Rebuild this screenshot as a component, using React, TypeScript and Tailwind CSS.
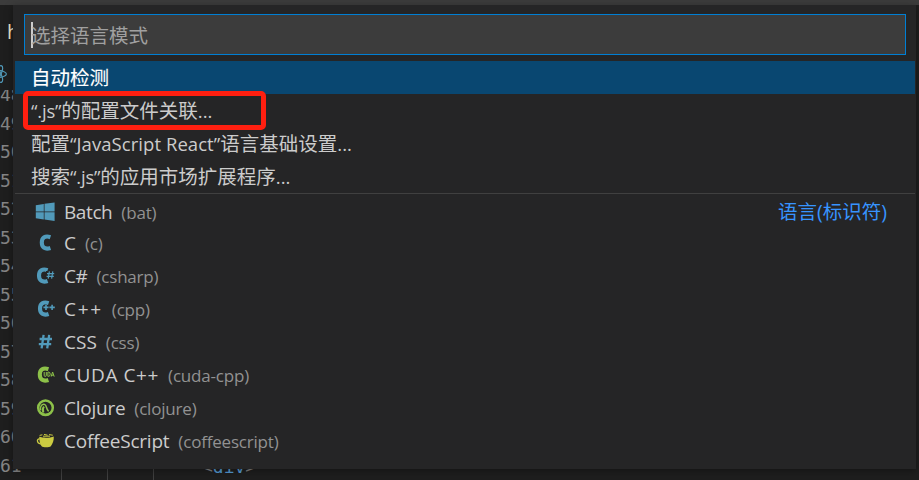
import React from "react";
import clsx from "clsx";

interface Language {
  name: string;
  id: string;
  icon: React.ReactNode;
  nameClass?: string;
}

const BLUE = "#519aba";
const GREEN = "#8dc149";
const YELLOW = "#cbcb41";

// Thick "C" shared by the C family of file icons
const CMark: React.FC<{ color: string; children?: React.ReactNode; x?: number }> = ({ color, children, x = 0 }) => (
  <svg width="20" height="20" viewBox="0 0 20 20">
    <path
      d="M12.8 4.6 C7.6 2.8 4.2 5 4.2 10 C4.2 15 7.6 17.2 12.8 15.4"
      transform={`translate(${x} -0.4)`}
      fill="none"
      stroke={color}
      strokeWidth="4.1"
    />
    {children}
  </svg>
);

const languages: Language[] = [
  {
    name: "Batch",
    id: "bat",
    nameClass: "tracking-[-0.4px]",
    icon: (
      <svg width="20" height="20" viewBox="0 0 20 20">
        <path fill={BLUE} d="M0.8 3.2 8.8 1.9V9.4H0.8zM9.5 1.8 19.6 0.4V9.4H9.5zM0.8 10.2H8.8V17.4L0.8 16.2zM9.5 10.2H19.6V19L9.5 17.5z" />
      </svg>
    ),
  },
  { name: "C", id: "c", icon: <CMark color={BLUE} x={2.6} /> },
  {
    name: "C#",
    id: "csharp",
    nameClass: "tracking-[-0.4px]",
    icon: (
      <CMark color={BLUE} x={-0.2}>
        <path d="M11 5H20V13H11z" fill="#252526" />
        <path d="M14.4 5.4 13.2 12.6M17.8 5.4 16.6 12.6M12 7.7H19.2M11.6 10.4H18.8" stroke={BLUE} strokeWidth="1.2" />
      </CMark>
    ),
  },
  {
    name: "C++",
    id: "cpp",
    nameClass: "tracking-[1.7px]",
    icon: (
      <CMark color={BLUE} x={0.8}>
        <path d="M8 8.4H13.5M10.8 5.8V11.2M14.2 8.4H19.6M16.9 5.8V11.2" stroke="#252526" strokeWidth="3.2" />
        <path d="M8.4 8.4H13.6M11 5.8V11M14.4 8.4H19.8M17.1 5.8V11" stroke={BLUE} strokeWidth="1.6" />
      </CMark>
    ),
  },
  {
    name: "CSS",
    id: "css",
    icon: (
      <svg width="20" height="20" viewBox="0 0 20 20">
        <path d="M8.6 2.8 6.6 16.4M14.2 2.8 12.2 16.4M4.6 7H17M3.8 12.2H16.2" stroke={BLUE} strokeWidth="2.3" />
      </svg>
    ),
  },
  {
    name: "CUDA C++",
    id: "cuda-cpp",
    nameClass: "tracking-[0.6px]",
    icon: (
      <CMark color={GREEN} x={0.6}>
        <path d="M8 6.2H20V12.4H8z" fill="#252526" />
        <path d="M9.2 7V10.4Q9.2 11.4 10.2 11.4Q11.3 11.4 11.3 10.4V7M12.9 7V11.4H13.4Q15.2 11.4 15.2 9.2T13.4 7zM16.2 11.6 17.6 7 19.2 11.6M16.6 10.2H18.7" fill="none" stroke={GREEN} strokeWidth="1" />
      </CMark>
    ),
  },
  {
    name: "Clojure",
    id: "clojure",
    nameClass: "tracking-[-0.25px]",
    icon: (
      <svg width="20" height="20" viewBox="0 0 20 20" fill="none" stroke={GREEN}>
        <circle cx="10.5" cy="9.8" r="7.3" strokeWidth="2.5" />
        <path d="M5.6 12.4C4.8 8.4 7 5.8 9.6 6.4C12 7.4 11 11 13.6 13.4" strokeWidth="1.5" />
        <path d="M9 8.6C7.4 10.4 7.4 12.4 8.4 14.6" strokeWidth="1.9" />
        <path d="M5 14.2C8 17.6 13 17.4 15.6 14.6" strokeWidth="2" />
      </svg>
    ),
  },
  {
    name: "CoffeeScript",
    id: "coffeescript",
    nameClass: "tracking-[-0.22px]",
    icon: (
      <svg width="20" height="20" viewBox="0 0 20 20">
        <path fill={YELLOW} d="M4.2 5.8C8 7 15 7 18.8 5.4C19 9.6 17.6 12.8 15.8 15.2C14.4 16.5 8 16.5 6.6 15.2C5 13.2 4.3 10 4.2 5.8z" />
        <path d="M4.6 8C1.6 7.4 1.4 12.4 5.8 13" fill="none" stroke={YELLOW} strokeWidth="1.3" />
        <path d="M4.6 4.4L7.4 3.8M9 3.4L12.6 4.2M14 3.6L17.8 4.2M8 5.2H15" fill="none" stroke={YELLOW} strokeWidth="1" />
      </svg>
    ),
  },
];

const lineNumbers = [48, 49, 50, 51, 52, 53, 54, 55, 56, 57, 58, 59, 60, 61];

const Latin: React.FC<{ children: React.ReactNode; className?: string }> = ({ children, className }) => (
  <span className={clsx("text-[18.5px]", className)}>{children}</span>
);

const Editor: React.FC = () => (
  <div className="h-full flex flex-col bg-[#1e1e1e]">
    <div className="h-[5px] shrink-0 bg-[#3c3c3c]" />
    <div className="h-[53px] shrink-0 pl-[7px] pt-[12px] leading-[30px] text-[20px] text-[#f0e6c8]">h</div>
    <div className="h-[32px] shrink-0 flex items-center">
      <svg width="20" height="20" viewBox="0 0 20 20" className="-ml-[13px] shrink-0" fill="none" stroke={BLUE} strokeWidth="1.2">
        <ellipse cx="10" cy="10" rx="9.4" ry="3.6" />
        <ellipse cx="10" cy="10" rx="9.4" ry="3.6" transform="rotate(60 10 10)" />
        <ellipse cx="10" cy="10" rx="9.4" ry="3.6" transform="rotate(120 10 10)" />
        <circle cx="10" cy="10" r="1.6" fill={BLUE} />
      </svg>
    </div>
    <div className="flex-1 min-h-0 overflow-hidden flex font-['DejaVu_Sans_Mono',monospace] text-[18px]">
      <div className="-mt-[9px] w-[61px] shrink-0 text-[#858585]">
        {lineNumbers.map((n) => (
          <div key={n} className="h-[28.5px] leading-[28.5px]">{n}</div>
        ))}
      </div>
      <div className="self-end h-[30px] w-[141px] shrink-0 flex gap-[45px]">
        <div className="w-px bg-[#404040]" />
        <div className="w-px bg-[#404040]" />
        <div className="w-px bg-[#404040]" />
      </div>
      <div className="self-end h-[27px] leading-[28px] text-[#808080]">
        &lt;<span className="text-[#569cd6]">div</span>&gt;
      </div>
    </div>
  </div>
);

const QuickPick: React.FC = () => (
  <div className="absolute left-[13px] top-[5px] w-[903px] h-[464px] bg-[#252526] shadow-[0_2px_8px_rgba(0,0,0,0.36)] text-[19.5px] text-[#cccccc] px-[2px] pr-px whitespace-nowrap">
    <div className="pl-[9px] pr-[9px] pt-[9px]">
      <div className="h-[41px] border border-[#007fd4] bg-[#3c3c3c] flex items-center pl-[6px] text-[#a0a0a0]">
        <div className="w-[2px] h-[26px] bg-[#cccccc] -mr-[2px]" />
        <span className="pt-[2px]">选择语言模式</span>
      </div>
    </div>

    <div className="mt-[6px]">
      <div className="h-[33px] leading-[33px] pl-4 bg-[#094771] text-white [-webkit-text-stroke:0.15px_white]">自动检测</div>
      <div className="relative h-[33px] leading-[33px] pl-4">
        <Latin className="tracking-[-0.2px]">“.js”</Latin>的配置文件关联<Latin>...</Latin>
        <div className="absolute left-[8px] -top-[3px] w-[243px] h-[39px] border-[5px] border-[#ff1f10] rounded-[5px]" />
      </div>
      <div className="h-[33px] leading-[33px] pl-4">
        配置<Latin className="tracking-[0.06px]">“JavaScript React”</Latin>语言基础设置<Latin>...</Latin>
      </div>
      <div className="h-[33px] leading-[33px] pl-4">
        搜索<Latin className="tracking-[-0.2px]">“.js”</Latin>的应用市场扩展程序<Latin>...</Latin>
      </div>
    </div>

    <div className="border-t border-[#404040]">
      {languages.map((lang, i) => (
        <div key={lang.id} className={clsx("flex items-center pl-[20px] pr-[28px]", i === 0 ? "h-[32px] pt-[3px]" : "h-[33px]")}>
          <div className="w-[29px] shrink-0">{lang.icon}</div>
          <div className="flex items-baseline gap-[9px] pt-[2px]">
            <span className={clsx("text-[19px]", lang.nameClass)}>{lang.name}</span>
            <span className="text-[17px] tracking-[-0.2px] text-[#929292]">({lang.id})</span>
          </div>
          {i === 0 && <div className="ml-auto text-[#3794ff]">语言(标识符)</div>}
        </div>
      ))}
    </div>
  </div>
);

const App: React.FC = () => (
  <div className="relative w-[919px] h-[480px] overflow-hidden font-['Open_Sans','Noto_Sans_CJK_SC',sans-serif]">
    <Editor />
    <QuickPick />
  </div>
);

export default App;
